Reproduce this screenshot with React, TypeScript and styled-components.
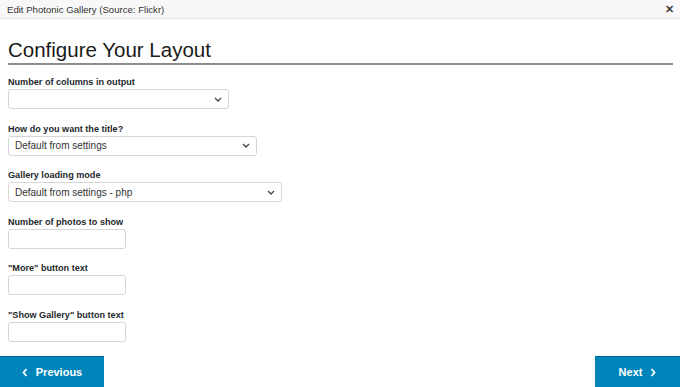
import React from 'react';
import styled, { createGlobalStyle } from 'styled-components';

const GlobalStyle = createGlobalStyle`
  html, body {
    margin: 0;
    padding: 0;
    background: #fff;
  }
  body {
    font-family: "Liberation Sans", Arial, sans-serif;
    color: #1e1e1e;
  }
`;

const Frame = styled.div`
  width: 680px;
  height: 387px;
  display: flex;
  flex-direction: column;
  overflow: hidden;
  background: #fff;
`;

const TopBar = styled.div`
  height: 18px;
  flex: none;
  display: flex;
  align-items: center;
  justify-content: space-between;
  padding: 0 6px 0 7px;
  background: #f8f8f8;
  border-bottom: 1px solid #e6e6e6;
  font-size: 9.6px;
  color: #333;
`;

const Close = styled.span`
  font-size: 11px;
  font-weight: bold;
  color: #444;
  line-height: 1;
`;

const Body = styled.div`
  flex: 1;
  min-height: 0;
  overflow: hidden;
  padding: 0 7px 0 8px;
  display: flex;
  flex-direction: column;
`;

const Heading = styled.h2`
  margin: 19px 0 0;
  padding-bottom: 1px;
  font-size: 20.5px;
  font-weight: normal;
  color: #1a1a1a;
  border-bottom: 2px solid #8c8c8c;
  line-height: 24px;
`;

const Fields = styled.div`
  display: flex;
  flex-direction: column;
  padding-top: 11px;
`;

const Field = styled.div`
  display: flex;
  flex-direction: column;
  margin-bottom: 13.5px;
`;

const Label = styled.label`
  font-size: 9.1px;
  font-weight: bold;
  color: #23282d;
  line-height: 12px;
  margin-bottom: 1px;
`;

const SelectBox = styled.div<{ $w: number }>`
  width: ${(p) => p.$w}px;
  height: 20px;
  box-sizing: border-box;
  border: 1px solid #d6d6d6;
  border-radius: 3px;
  display: flex;
  align-items: center;
  justify-content: space-between;
  padding: 0 6px 0 6px;
  font-size: 10px;
  color: #333;
  background: #fff;
`;

const TextBox = styled.div`
  width: 118px;
  height: 20px;
  box-sizing: border-box;
  border: 1px solid #d6d6d6;
  border-radius: 3px;
  background: #fff;
`;

const Footer = styled.div`
  height: 31px;
  flex: none;
  display: flex;
  justify-content: space-between;
`;

const NavButton = styled.div<{ $w: number }>`
  width: ${(p) => p.$w}px;
  background: #0085ba;
  border-top: 1px solid #006a95;
  color: #fff;
  font-size: 11px;
  font-weight: bold;
  display: flex;
  align-items: center;
  justify-content: center;
  gap: 8px;
`;

const Chevron = ({ dir }: { dir: 'down' | 'left' | 'right' }) => {
  if (dir === 'down') {
    return (
      <svg width="8" height="5" viewBox="0 0 8 5">
        <path d="M1 1l3 3 3-3" stroke="#444" strokeWidth="1.3" fill="none" />
      </svg>
    );
  }
  const d = dir === 'left' ? 'M4.5 1L1.5 4.5 4.5 8' : 'M1.5 1l3 3.5-3 3.5';
  return (
    <svg width="6" height="9" viewBox="0 0 6 9">
      <path d={d} stroke="#fff" strokeWidth="1.8" fill="none" />
    </svg>
  );
};

const fields = [
  { label: 'Number of columns in output', kind: 'select', w: 221, value: '' },
  { label: 'How do you want the title?', kind: 'select', w: 249, value: 'Default from settings' },
  { label: 'Gallery loading mode', kind: 'select', w: 274, value: 'Default from settings - php' },
  { label: 'Number of photos to show', kind: 'text' },
  { label: '"More" button text', kind: 'text' },
  { label: '"Show Gallery" button text', kind: 'text' },
];

export default function App() {
  return (
    <Frame>
      <GlobalStyle />
      <TopBar>
        <span>Edit Photonic Gallery (Source: Flickr)</span>
        <Close>✕</Close>
      </TopBar>
      <Body>
        <Heading>Configure Your Layout</Heading>
        <Fields>
          {fields.map((f, i) => (
            <Field key={i}>
              <Label>{f.label}</Label>
              {f.kind === 'select' ? (
                <SelectBox $w={f.w as number}>
                  <span>{f.value}</span>
                  <Chevron dir="down" />
                </SelectBox>
              ) : (
                <TextBox />
              )}
            </Field>
          ))}
        </Fields>
      </Body>
      <Footer>
        <NavButton $w={104}>
          <Chevron dir="left" />
          Previous
        </NavButton>
        <NavButton $w={85}>
          Next
          <Chevron dir="right" />
        </NavButton>
      </Footer>
    </Frame>
  );
}
